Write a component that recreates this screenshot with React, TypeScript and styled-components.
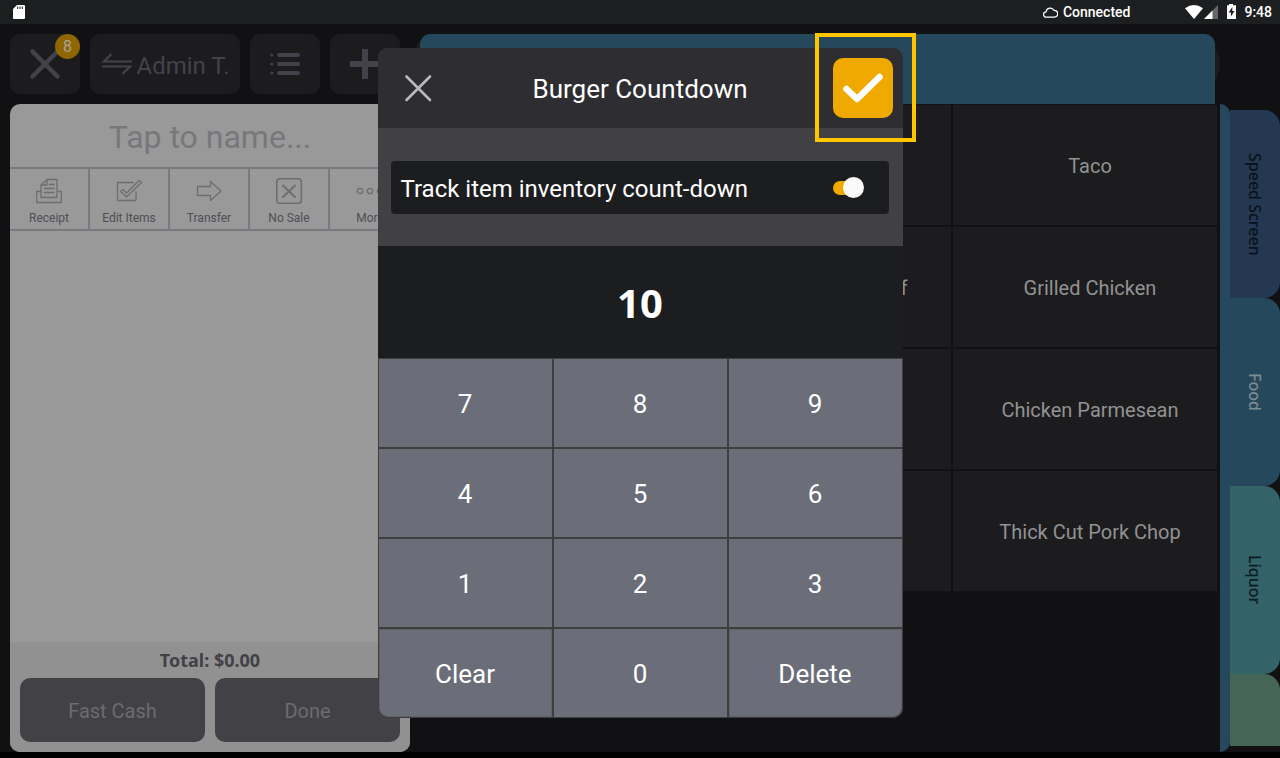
import React from "react";
import styled, { createGlobalStyle, css } from "styled-components";

const GlobalStyle = createGlobalStyle`
  *, *::before, *::after { box-sizing: border-box; }
  body { margin: 0; background: #000; }
  button, input { font: inherit; color: inherit; margin: 0; padding: 0; border: 0; background: none; }
  button { cursor: pointer; }
`;

const ui = css`
  font-family: Roboto, sans-serif;
`;
const heading = css`
  font-family: "Noto Sans", sans-serif;
`;

const Page = styled.div`
  ${ui}
  position: relative;
  display: flex;
  flex-direction: column;
  min-height: 100vh;
  background: #111113;
  border-bottom: 6px solid #000;
`;

/* Status bar */
const StatusBar = styled.header`
  display: flex;
  align-items: center;
  height: 24px;
  padding: 0 8px 0 13px;
  background: #1c1e1f;
  color: #fff;
  font-size: 14px;
  line-height: 24px;
`;
const Connection = styled.div`
  display: flex;
  align-items: center;
  gap: 5px;
  margin-left: auto;
  font-weight: 500;
`;
const StatusIcons = styled.div`
  display: flex;
  align-items: center;
  gap: 7px;
  margin-left: 55px;
  font-weight: 500;
`;

/* Main area */
const Main = styled.main`
  flex: 1;
  display: flex;
  padding: 10px 0 0 10px;
`;
const LeftColumn = styled.section`
  display: flex;
  flex-direction: column;
  flex: none;
  gap: 10px;
  width: 400px;
`;
const Toolbar = styled.nav`
  display: flex;
  gap: 10px;
  height: 60px;
`;
const ToolButton = styled.button<{ $wide?: boolean }>`
  position: relative;
  display: flex;
  align-items: center;
  justify-content: center;
  gap: 4px;
  flex: none;
  width: ${(p) => (p.$wide ? "150px" : "70px")};
  border-radius: 10px;
  background: #1c1c1e;
  color: #42424a;
  font-size: 24px;
`;
const UserName = styled.span`
  padding-top: 3px;
`;
const CountBadge = styled.span`
  position: absolute;
  top: 0;
  right: 0;
  width: 25px;
  height: 25px;
  border-radius: 50%;
  background: #906600;
  color: #a6a29a;
  font-size: 16px;
  line-height: 26px;
`;

const Order = styled.div`
  flex: 1;
  display: flex;
  flex-direction: column;
  overflow: hidden;
  border-radius: 10px;
  background: #999;
`;
const NameInput = styled.input`
  height: 63px;
  padding-top: 2px;
  color: #77777c;
  font-size: 32px;
  text-align: center;
  &::placeholder { color: #77777c; opacity: 1; }
`;
const Actions = styled.div`
  display: grid;
  grid-template-columns: repeat(5, 1fr);
  border: solid #79797f;
  border-width: 2px 0;
`;
const Action = styled.button`
  display: flex;
  flex-direction: column;
  align-items: center;
  gap: 4px;
  height: 60px;
  padding-top: 8px;
  color: #4e4e56;
  font-size: 12px;
  line-height: 18px;
  border-right: 2px solid #79797f;
  &:last-child { border-right: 0; }
  svg { color: #6e6e70; }
`;
const Items = styled.div`
  flex: 1;
`;
const OrderFooter = styled.footer`
  display: grid;
  grid-template-columns: 1fr 1fr;
  gap: 0 10px;
  padding: 0 10px 10px;
  background: #919191;
`;
const Total = styled.div`
  ${heading}
  grid-column: 1 / -1;
  color: #414146;
  font-size: 18px;
  font-weight: 700;
  line-height: 36px;
  text-align: center;
`;
const PayButton = styled.button`
  height: 64px;
  padding-top: 2px;
  border-radius: 10px;
  background: #414146;
  color: #6c6c6e;
  font-size: 20px;
`;

/* Menu */
const Menu = styled.section`
  flex: 1;
  margin-left: 5px;
`;
const SearchBar = styled.div`
  height: 60px;
  margin-bottom: 10px;
  padding: 0 5px;
  border-radius: 20px 30px 30px 20px;
  background: #1c1c1e;
`;
const ActiveTab = styled.div`
  height: 70px;
  border-radius: 10px 10px 0 0;
  background: #26485c;
`;
const MenuGrid = styled.div`
  display: grid;
  grid-template-columns: repeat(3, 1fr);
  grid-auto-rows: 120px;
  gap: 2px;
  padding: 1px 3px 0 6px;
`;
const MenuItem = styled.button`
  padding: 2px 0 0 10px;
  background: #1c1c1e;
  color: #929292;
  font-size: 20px;
`;

const Categories = styled.aside`
  display: flex;
  width: 60px;
  margin-top: 70px;
`;
const Spine = styled.div`
  width: 10px;
  border-radius: 0 10px 10px 0;
  background: #26485c;
`;
const CategoryList = styled.div`
  flex: 1;
  display: flex;
  flex-direction: column;
  margin: 6px 0;
`;
const Category = styled.button<{ $bg: string; $ink: string; $last?: boolean }>`
  ${heading}
  flex: ${(p) => (p.$last ? "1" : "none")};
  height: ${(p) => (p.$last ? "auto" : "188px")};
  border-radius: ${(p) => (p.$last ? "0 16px 0 0" : "0 16px 16px 0")};
  background: ${(p) => p.$bg};
  color: ${(p) => p.$ink};
  font-size: 16px;
  font-weight: 500;
  writing-mode: vertical-rl;
`;

/* Countdown dialog */
const Overlay = styled.div`
  position: absolute;
  inset: 0;
  display: flex;
  justify-content: center;
  align-items: flex-start;
  padding-top: 48px;
`;
const Dialog = styled.div`
  width: 525px;
  border-radius: 10px;
  background: #414145;
  color: #fff;
`;
const DialogHeader = styled.header`
  display: flex;
  align-items: center;
  justify-content: space-between;
  height: 80px;
  padding: 0 10px;
  border-radius: 10px 10px 0 0;
  background: #2e2e32;
`;
const DialogTitle = styled.h1`
  margin: 0;
  padding-top: 2px;
  font-size: 26px;
  font-weight: 400;
`;
const IconButton = styled.button`
  display: grid;
  place-items: center;
  width: 60px;
  height: 60px;
  color: #b9b9ba;
`;
const ConfirmButton = styled(IconButton)`
  position: relative;
  border-radius: 10px;
  background: #efa900;
  color: #fff;
`;
const Highlight = styled.span`
  position: absolute;
  inset: -25px -23px -24px -18px;
  border: 4px solid #ffc600;
  pointer-events: none;
`;
const TrackRow = styled.label`
  display: flex;
  align-items: center;
  justify-content: space-between;
  height: 53px;
  margin: 33px 14px 32px 13px;
  padding: 0 26px 0 10px;
  border-radius: 4px;
  background: #1c1d1f;
  font-size: 24px;
`;
const TrackText = styled.span`
  padding-top: 2px;
`;
const Switch = styled.input`
  appearance: none;
  position: relative;
  width: 30px;
  height: 14px;
  border-radius: 7px;
  background: #efa900;
  &::before {
    content: "";
    position: absolute;
    top: -4px;
    right: -1px;
    width: 21px;
    height: 21px;
    border-radius: 50%;
    background: #fafafa;
  }
`;
const Display = styled.output`
  ${heading}
  display: block;
  background: #1c1d1f;
  font-size: 40px;
  font-weight: 700;
  line-height: 114px;
  height: 112px;
  text-align: center;
`;
const Keypad = styled.div`
  display: grid;
  grid-template-columns: repeat(3, 1fr);
  grid-auto-rows: 88px;
  gap: 2px;
  padding: 1px;
  border-radius: 0 0 10px 10px;
  background: #3e3e3e;
`;
const Key = styled.button`
  padding-top: 2px;
  background: #6b6d79;
  font-size: 26px;
  &:nth-child(10) { border-radius: 0 0 0 9px; }
  &:nth-child(12) { border-radius: 0 0 9px 0; }
  &:nth-child(10), &:nth-child(12) { border: 1px solid #606165; }
`;

const stroke = {
  fill: "none",
  stroke: "currentColor",
  strokeLinecap: "round",
  strokeLinejoin: "round",
} as const;

const ReceiptIcon = () => (
  <svg width="28" height="28" viewBox="0 0 28 28" {...stroke} strokeWidth="1.3">
    <path d="M6 14.5H1.7v11h24.6v-11H22M6 20.500V8l6-5.500h10v18zM12 2.500V8H6M14.500 7.500H19M9.500 11.500H19M9.500 15.500H19" />
  </svg>
);
const EditIcon = () => (
  <svg width="28" height="28" viewBox="0 0 28 28" {...stroke} strokeWidth="1.300">
    <path d="M18 5.500H3.500a1 1 0 0 0-1 1v16a1 1 0 0 0 1 1h16.500a1 1 0 0 0 1-1V15" />
    <path d="M5.500 14.500l2.500-2 3.500 3.500L24 3.500l2.500 2L11.500 20z" />
  </svg>
);
const TransferIcon = () => (
  <svg width="28" height="28" viewBox="0 0 28 28" {...stroke} strokeWidth="1.300">
    <path d="M2.500 9.500h13V4.500l10.500 9.500-10.500 9.500v-5h-13z" />
  </svg>
);
const NoSaleIcon = () => (
  <svg width="28" height="28" viewBox="0 0 28 28" {...stroke} strokeWidth="1.600">
    <rect x="1.800" y="1.800" width="24.500" height="24.500" rx="3" />
    <path d="M8 8.500l12 11.500M20 8.500L8 20" strokeWidth="2" />
  </svg>
);
const MoreIcon = () => (
  <svg width="28" height="28" viewBox="0 0 28 28" {...stroke} strokeWidth="1.300">
    <circle cx="4" cy="14" r="2.700" />
    <circle cx="14" cy="14" r="2.700" />
    <circle cx="24" cy="14" r="2.700" />
  </svg>
);

const actions = [
  { label: "Receipt", icon: <ReceiptIcon /> },
  { label: "Edit Items", icon: <EditIcon /> },
  { label: "Transfer", icon: <TransferIcon /> },
  { label: "No Sale", icon: <NoSaleIcon /> },
  { label: "More", icon: <MoreIcon /> },
];

/* Menu slots in reading order; an empty string is an unassigned slot. */
const menuItems = [
  "", "", "Taco",
  "", "Shaved Roast Beef", "Grilled Chicken",
  "", "", "Chicken Parmesean",
  "", "", "Thick Cut Pork Chop",
];

const keys = ["7", "8", "9", "4", "5", "6", "1", "2", "3", "Clear", "0", "Delete"];

export default function App() {
  return (
    <Page>
      <GlobalStyle />
      <StatusBar>
        <svg width="12" height="14" viewBox="0 0 12 14">
          <path fill="#fff" d="M4 0h7a1 1 0 0 1 1 1v12a1 1 0 0 1-1 1H1a1 1 0 0 1-1-1V4z" />
          <path stroke="#1c1e1f" d="M4.700 1.500V4M7 1.500V4M9.300 1.500V4" />
        </svg>
        <Connection>
          <svg width="15" height="12" viewBox="0 0 15 12" {...stroke} strokeWidth="1.200">
            <path d="M3.500 11.200a2.700 2.700 0 0 1-.4-5.400A4.200 4.200 0 0 1 11 4.400a3.400 3.400 0 0 1 .6 6.800z" />
          </svg>
          Connected
        </Connection>
        <StatusIcons>
          <svg width="52" height="16" viewBox="0 0 52 16">
            <path fill="#fff" d="M0 4.200Q9 -2.400 18 4.200L9 15z" />
            <path fill="#666768" d="M33 1v14H19z" />
            <path fill="#fff" d="M27.500 6.500V15H19z" />
            <path fill="#fff" d="M44 0h4v1.300h3V15h-9V1.300h2z" />
            <path fill="#1c1e1f" d="M47.300 3l-3.600 5.500h2.200v4l3.600-5.500h-2.200z" />
          </svg>
          9:48
        </StatusIcons>
      </StatusBar>

      <Main>
        <LeftColumn>
          <Toolbar>
            <ToolButton aria-label="Close order">
              <svg width="32" height="32" viewBox="0 0 32 32" {...stroke} strokeWidth="4.500">
                <path d="M3.500 3.500l25 25M28.500 3.500l-25 25" />
              </svg>
              <CountBadge>8</CountBadge>
            </ToolButton>
            <ToolButton $wide>
              <svg width="32" height="26" viewBox="0 0 32 26" fill="none" stroke="currentColor" strokeWidth="2.200">
                <path d="M31 10.500H3L10.500 3M1 15.500h28L21.500 23" />
              </svg>
              <UserName>Admin T.</UserName>
            </ToolButton>
            <ToolButton aria-label="List">
              <svg width="30" height="24" viewBox="0 0 30 24" {...stroke} strokeWidth="4">
                <path d="M9 3h19M9 12h19M9 21h19" />
                <path d="M1.700 3h.1M1.700 12h.1M1.700 21h.1" strokeWidth="3" />
              </svg>
            </ToolButton>
            <ToolButton aria-label="Add">
              <svg width="30" height="30" viewBox="0 0 30 30" stroke="currentColor" strokeWidth="6">
                <path d="M15 0v30M0 15h30" />
              </svg>
            </ToolButton>
          </Toolbar>

          <Order>
            <NameInput aria-label="Order name" placeholder="Tap to name..." />
            <Actions>
              {actions.map((a) => (
                <Action key={a.label}>
                  {a.icon}
                  {a.label}
                </Action>
              ))}
            </Actions>
            <Items />
            <OrderFooter>
              <Total>Total: $0.00</Total>
              <PayButton>Fast Cash</PayButton>
              <PayButton>Done</PayButton>
            </OrderFooter>
          </Order>
        </LeftColumn>

        <Menu>
          <SearchBar>
            <ActiveTab />
          </SearchBar>
          <MenuGrid>
            {menuItems.map((name, slot) => (
              <MenuItem key={slot}>{name}</MenuItem>
            ))}
          </MenuGrid>
        </Menu>

        <Categories>
          <Spine />
          <CategoryList>
            <Category $bg="#243852" $ink="#0a121c">Speed Screen</Category>
            <Category $bg="#26485c" $ink="#7f8b93">Food</Category>
            <Category $bg="#336269" $ink="#0c1c1f">Liquor</Category>
            <Category $bg="#456556" $ink="#0c1c1f" $last aria-label="More categories" />
          </CategoryList>
        </Categories>
      </Main>

      <Overlay>
        <Dialog role="dialog" aria-labelledby="dialog-title">
          <DialogHeader>
            <IconButton aria-label="Cancel">
              <svg width="28" height="28" viewBox="0 0 28 28" {...stroke} strokeWidth="2.600">
                <path d="M2.500 2.500l23.500 23.500M26 2.500L2.500 26" />
              </svg>
            </IconButton>
            <DialogTitle id="dialog-title">Burger Countdown</DialogTitle>
            <ConfirmButton aria-label="Confirm">
              <svg width="40" height="30" viewBox="0 0 40 30" {...stroke} strokeWidth="6.500">
                <path d="M3.500 16L14 26 36.500 4" />
              </svg>
              <Highlight />
            </ConfirmButton>
          </DialogHeader>
          <TrackRow>
            <TrackText>Track item inventory count-down</TrackText>
            <Switch type="checkbox" defaultChecked />
          </TrackRow>
          <Display>10</Display>
          <Keypad>
            {keys.map((k) => (
              <Key key={k}>{k}</Key>
            ))}
          </Keypad>
        </Dialog>
      </Overlay>
    </Page>
  );
}
